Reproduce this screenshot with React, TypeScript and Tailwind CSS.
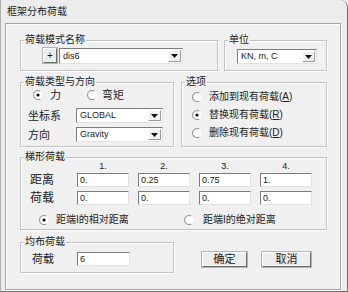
import React from "react";

const FONT = "font-['Liberation_Sans','Noto_Sans_CJK_SC',sans-serif]";

function Radio({ checked }: { checked?: boolean }) {
  return (
    <svg width="10" height="10" viewBox="0 0 10 10" className="shrink-0">
      <circle cx="5" cy="5" r="4.5" fill="#ffffff" />
      <path d="M7.25 1.1 A4.5 4.5 0 1 0 7.25 8.9" stroke="#9a9a9a" strokeWidth="1.1" fill="none" />
      {checked && <circle cx="5" cy="5" r="1.6" fill="#111111" />}
    </svg>
  );
}

function Arrow() {
  return (
    <div className="w-[13px] my-[1px] mr-[1px] bg-[#f0f0f0] border border-t-white border-l-white border-r-[#9a9a9a] border-b-[#9a9a9a] flex items-center justify-center">
      <svg width="7" height="4" viewBox="0 0 7 4">
        <path d="M0 0H7L3.5 4Z" fill="#111111" />
      </svg>
    </div>
  );
}

function Combo({ value, className }: { value: string; className: string }) {
  return (
    <div className={`flex bg-white border border-t-[#7c7c7c] border-l-[#7c7c7c] border-r-[#e2e2e2] border-b-[#e2e2e2] ${className}`}>
      <div className="flex-1 flex items-center pl-[3px] text-[9px] leading-none text-[#1a1a1a]">{value}</div>
      <Arrow />
    </div>
  );
}

function Field({ value, className }: { value: string; className: string }) {
  return (
    <div className={`flex items-center bg-white border border-t-[#7c7c7c] border-l-[#7c7c7c] border-r-[#e2e2e2] border-b-[#e2e2e2] pl-[2px] text-[9px] leading-none text-[#1a1a1a] ${className}`}>
      {value}
    </div>
  );
}

function Group({ label, className, children }: { label: string; className: string; children?: React.ReactNode }) {
  return (
    <div className={`relative border border-[#c2c2c2] shadow-[inset_1px_1px_0_#ffffff,1px_1px_0_#ffffff] ${className}`}>
      <span className="absolute left-[3px] top-[-8px] px-[1px] bg-[#f0f0f0] text-[10px] leading-[14px] text-[#222]">{label}</span>
      {children}
    </div>
  );
}

function Btn({ label, className }: { label: string; className: string }) {
  return (
    <div className={`flex items-center justify-center bg-[#ededed] border border-t-white border-l-white border-r-[#6a6a6a] border-b-[#6a6a6a] shadow-[0_0_0_1px_#b4b4b4] leading-none text-[#1a1a1a] ${className}`}>
      {label}
    </div>
  );
}

function RadioItem({ checked, children, gap, size }: { checked?: boolean; children: React.ReactNode; gap: string; size: string }) {
  return (
    <div className={`flex items-center ${gap}`}>
      <Radio checked={checked} />
      <span className={`leading-[14px] text-[#222] ${size}`}>{children}</span>
    </div>
  );
}

export default function App() {
  return (
    <div className={`w-[348px] h-[292px] bg-[#ececec] border-r border-b border-l border-r-[#6e6e6e] border-b-[#6e6e6e] border-l-[#b0b0b0] rounded-tr-[7px] flex flex-col ${FONT}`}>
      <div className="h-[23px] flex items-center pl-[6px] text-[10px] text-[#222]">框架分布荷载</div>
      <div className="ml-[4px] w-[336px] h-[267px] bg-[#f0f0f0] border border-[#a5a5a5] shadow-[inset_1px_1px_0_#ffffff,1px_1px_0_#ffffff] pl-[14px] pt-[16px] flex flex-col">
        {/* row 1 */}
        <div className="flex gap-[6px]">
          <Group label="荷载模式名称" className="w-[198px] h-[31px] pl-[22px] pt-[7px]">
            <div className="flex items-start">
              <Btn label="+" className="w-[14px] h-[15px] text-[10px]" />
              <Combo value="dis6" className="ml-[2px] w-[124px] h-[16px]" />
            </div>
          </Group>
          <Group label="单位" className="w-[103px] h-[31px] pl-[12px] pt-[8px]">
            <Combo value="KN, m, C" className="w-[80px] h-[15px]" />
          </Group>
        </div>
        {/* row 2 */}
        <div className="flex gap-[7px] mt-[11px]">
          <Group label="荷载类型与方向" className="w-[154px] h-[65px] pl-[12px] pt-[5px]">
            <div className="flex h-[14px] items-center">
              <div className="w-[54px]">
                <RadioItem checked gap="gap-[7px]" size="text-[11px]">力</RadioItem>
              </div>
              <RadioItem gap="gap-[5px]" size="text-[11px]">弯矩</RadioItem>
            </div>
            <div className="flex items-center mt-[6px] -ml-[5px]">
              <span className="w-[48px] text-[11px] leading-[14px] text-[#222]">坐标系</span>
              <Combo value="GLOBAL" className="w-[87px] h-[15px]" />
            </div>
            <div className="flex items-center mt-[4px] -ml-[5px]">
              <span className="w-[48px] text-[11px] leading-[14px] text-[#222]">方向</span>
              <Combo value="Gravity" className="w-[87px] h-[15px]" />
            </div>
          </Group>
          <Group label="选项" className="w-[146px] h-[65px] pl-[10px] pt-[7px]">
            <div className="flex flex-col gap-[4px]">
              <RadioItem gap="gap-[7px]" size="text-[10px]">添加到现有荷载(<u>A</u>)</RadioItem>
              <RadioItem checked gap="gap-[7px]" size="text-[10px]">替换现有荷载(<u>R</u>)</RadioItem>
              <RadioItem gap="gap-[7px]" size="text-[10px]">删除现有荷载(<u>D</u>)</RadioItem>
            </div>
          </Group>
        </div>
        {/* row 3 */}
        <Group label="梯形荷载" className="mt-[10px] w-[307px] h-[73px] pl-[9px] pt-[2px]">
          <div className="flex h-[12px] items-center">
            <span className="w-[47px]" />
            <div className="flex gap-[9px]">
              {["1.", "2.", "3.", "4."].map((h) => (
                <span key={h} className="w-[52px] text-center text-[9px] leading-none text-[#1a1a1a]">{h}</span>
              ))}
            </div>
          </div>
          <div className="flex items-center mt-[1px]">
            <span className="w-[47px] text-[12px] leading-[14px] text-[#222]">距离</span>
            <div className="flex gap-[9px]">
              {["0.", "0.25", "0.75", "1."].map((v, i) => (
                <Field key={i} value={v} className="w-[52px] h-[14px]" />
              ))}
            </div>
          </div>
          <div className="flex items-center mt-[4px]">
            <span className="w-[47px] text-[12px] leading-[14px] text-[#222]">荷载</span>
            <div className="flex gap-[9px]">
              {["0.", "0.", "0.", "0."].map((v, i) => (
                <Field key={i} value={v} className="w-[52px] h-[14px]" />
              ))}
            </div>
          </div>
          <div className="flex items-center mt-[8px] pl-[9px]">
            <div className="w-[145px]">
              <RadioItem checked gap="gap-[7px]" size="text-[10px]">距端I的相对距离</RadioItem>
            </div>
            <RadioItem gap="gap-[9px]" size="text-[10px]">距端I的绝对距离</RadioItem>
          </div>
        </Group>
        {/* row 4 */}
        <div className="flex mt-[12px]">
          <Group label="均布荷载" className="w-[154px] h-[31px] pl-[11px] pt-[9px]">
            <div className="flex items-center">
              <span className="w-[45px] text-[11px] leading-[14px] text-[#222]">荷载</span>
              <Field value="6" className="w-[53px] h-[14px]" />
            </div>
          </Group>
          <div className="flex ml-[28px] mt-[10px] gap-[15px] items-start">
            <Btn label="确定" className="w-[45px] h-[15px] text-[11px]" />
            <Btn label="取消" className="w-[49px] h-[15px] text-[11px]" />
          </div>
        </div>
      </div>
    </div>
  );
}
